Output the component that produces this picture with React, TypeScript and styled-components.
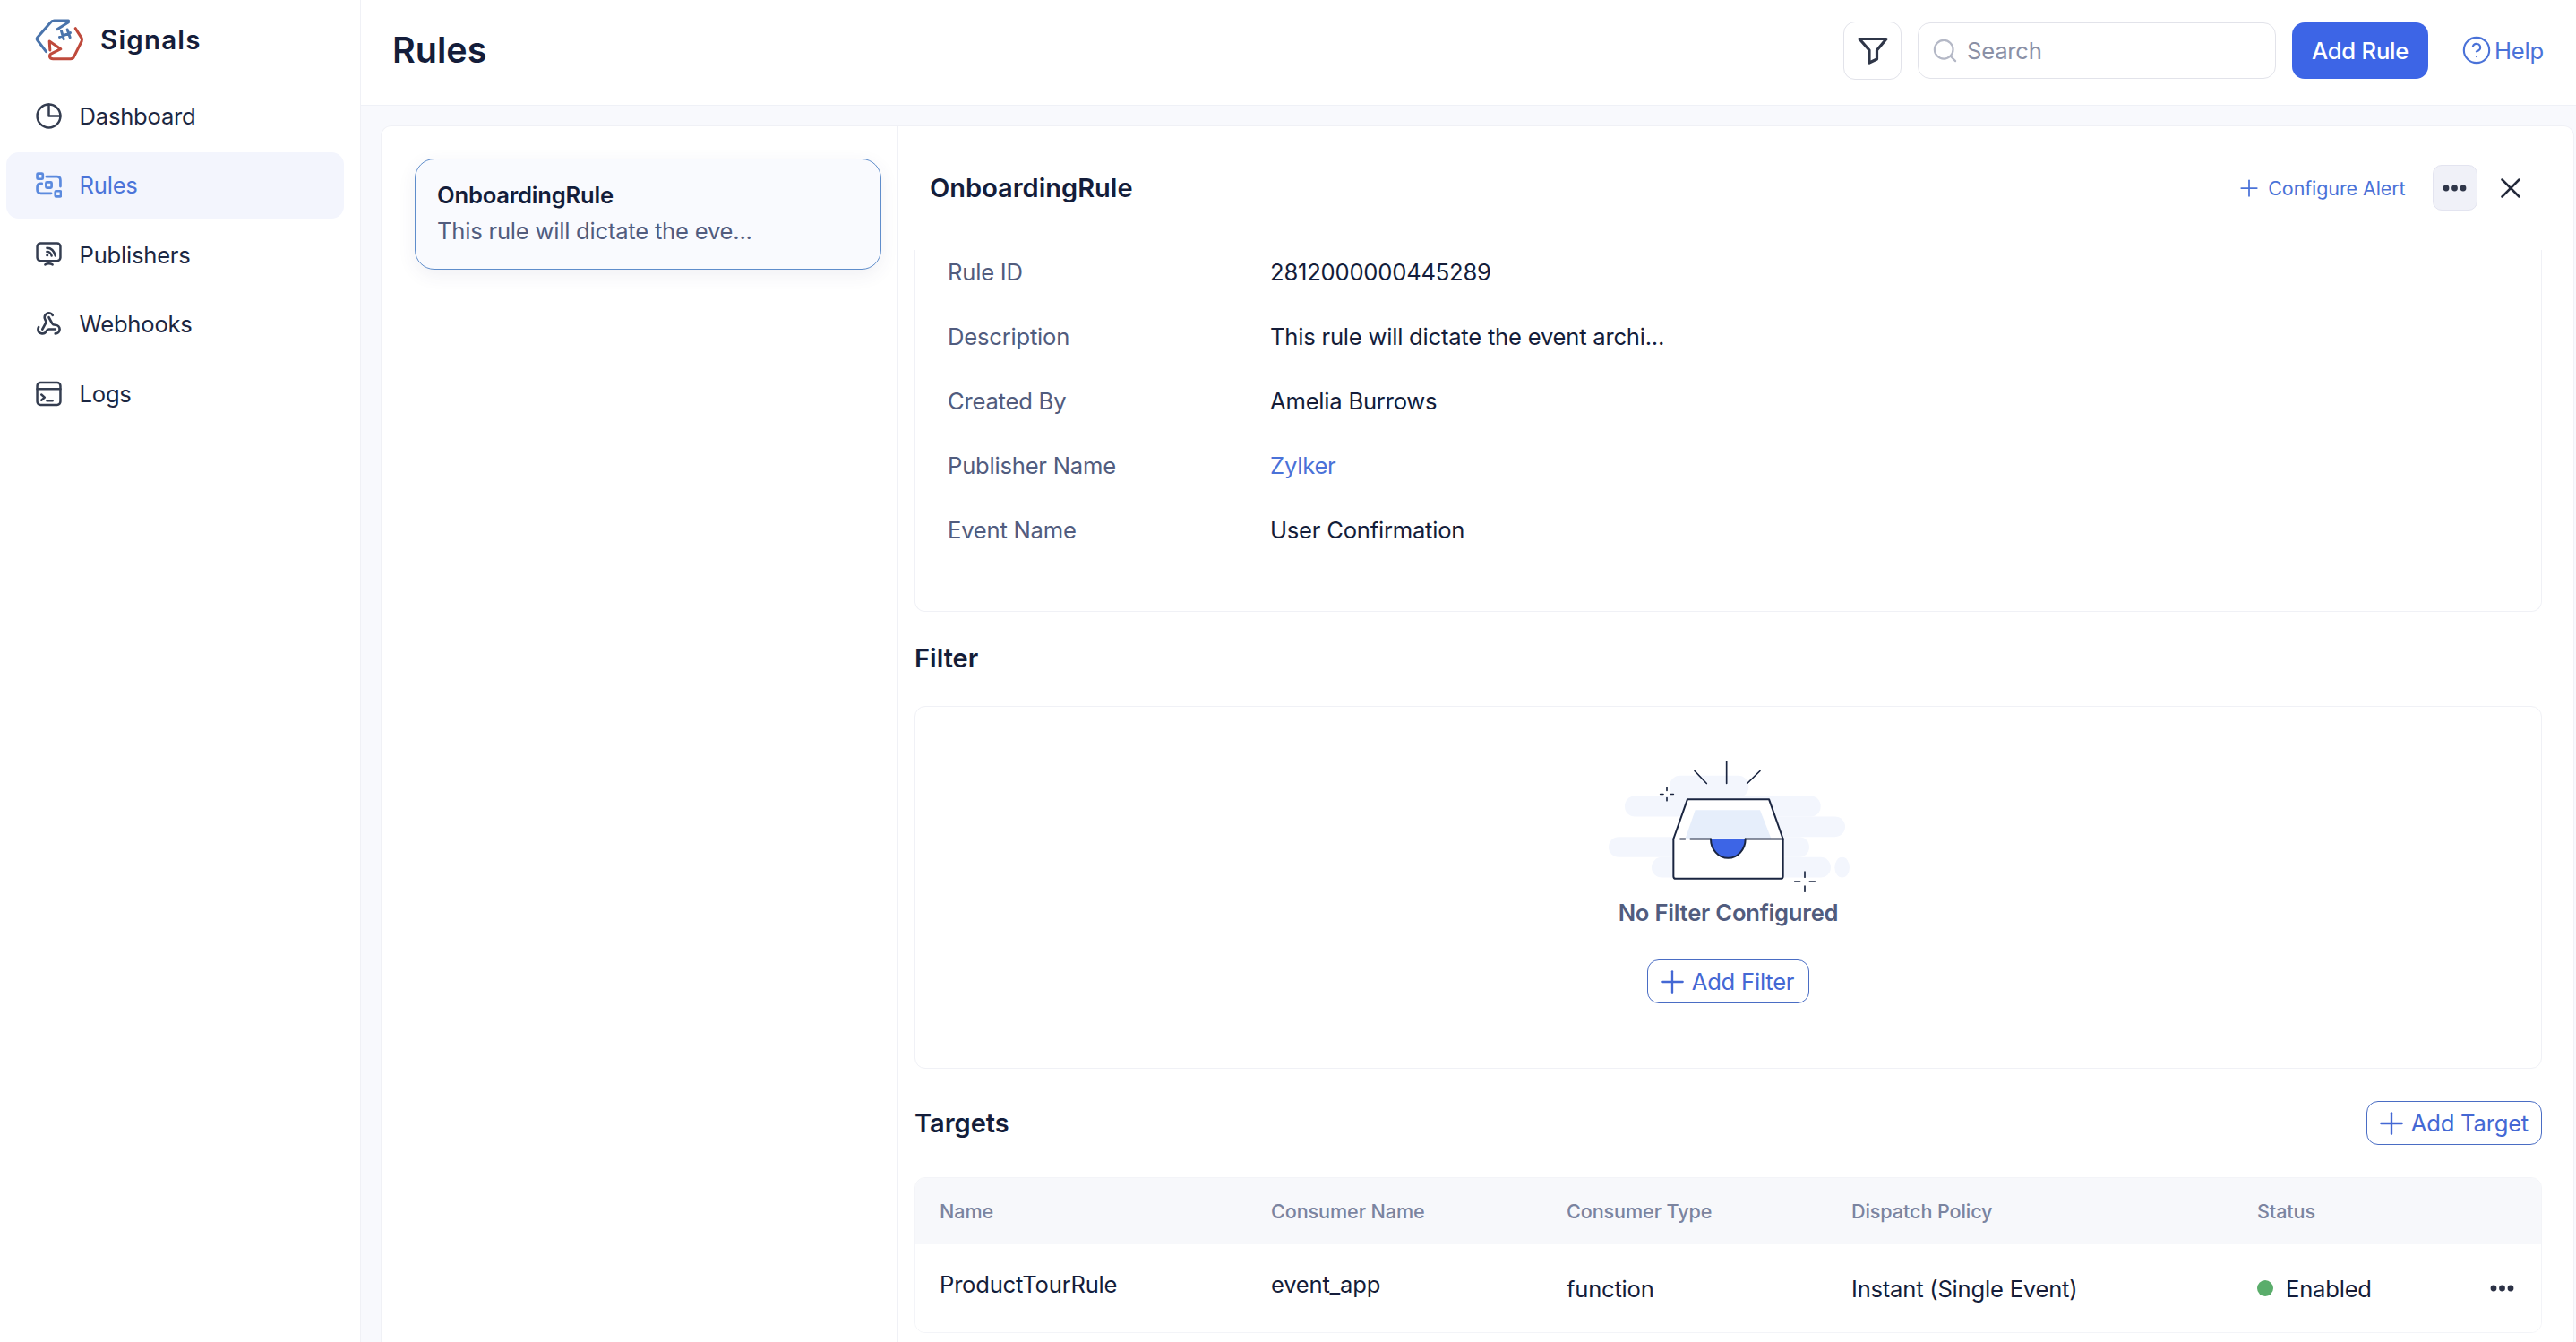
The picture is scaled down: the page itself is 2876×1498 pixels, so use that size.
import React from "react";
import styled, { createGlobalStyle } from "styled-components";
import { Search, CircleHelp, Plus, X, Webhook } from "lucide-react";

const Global = createGlobalStyle`
  html, body { margin: 0; padding: 0; background: #fff; }
  body { font-family: Inter, "Noto Sans", sans-serif; color: #141d3a; }
  * { box-sizing: border-box; }
`;

const Page = styled.div`
  width: 2876px; height: 1498px; overflow: hidden;
  display: grid; grid-template-columns: 403px 1fr; background: #fff;
`;
const Sidebar = styled.aside`
  border-right: 1px solid #f0f1f6;
  padding: 0 18px 0 7px;
  display: flex; flex-direction: column;
`;
const Brand = styled.div`
  height: 92px; display: flex; align-items: flex-start; gap: 17px;
  padding: 20px 0 0 31px;
`;
const BrandName = styled.span`
  font-size: 29.5px; font-weight: 600; letter-spacing: 1.2px; line-height: 48px; color: #141d3a;
`;
const Nav = styled.nav`display: flex; flex-direction: column; gap: 3.5px;`;
const NavItem = styled.div<{ $active?: boolean }>`
  height: 74px; border-radius: 14px; display: flex; align-items: center; gap: 19.5px;
  padding-left: 33px; font-size: 25.6px; letter-spacing: -0.22px;
  background: ${p => (p.$active ? "#f3f5fd" : "transparent")};
  color: ${p => (p.$active ? "#4b74d9" : "#1c2742")};
  svg { width: 29px; height: 29px; flex: none; color: ${p => (p.$active ? "#5b8ade" : "#343d50")}; }
`;
const Main = styled.main`display: flex; flex-direction: column; background: #f8f9fd; min-width: 0;`;
const Header = styled.header`
  height: 118px; flex: none; background: #fff; border-bottom: 1px solid #eff1f7;
  display: flex; align-items: center; padding: 0 36px 5px 35px;
`;
const Title = styled.h1`margin: 0 auto 0 0; font-size: 39.5px; font-weight: 600; color: #141d3a;`;
const IconButton = styled.button`
  width: 65px; height: 65px; border: 1px solid #e2e3ea; border-radius: 13px; background: #fff;
  display: flex; align-items: center; justify-content: center; padding: 0; color: #2f3648;
`;
const SearchBox = styled.div`
  width: 400px; height: 63px; margin-left: 18px; border: 1.5px solid #e2e3ea; border-radius: 14px;
  display: flex; align-items: center; gap: 9px; padding-left: 14px; font-size: 25.6px; letter-spacing: -0.22px; color: #8a90a6;
  svg { width: 31px; height: 31px; color: #b4b8c6; stroke-width: 1.7; }
`;
const PrimaryButton = styled.button`
  width: 152px; height: 63px; margin-left: 18px; border: 0; border-radius: 14px;
  background: #3d65e6; color: #fff; font: 500 25.6px Inter, sans-serif; letter-spacing: -0.22px;
`;
const HelpLink = styled.a`
  margin-left: 37px; display: flex; align-items: center; gap: 3px; font-size: 25.6px; letter-spacing: -0.22px; color: #4a72d8;
  svg { width: 34px; height: 34px; stroke-width: 1.5; }
`;
const Board = styled.div`
  flex: 1; min-height: 0; margin: 22px 2px 0 22px; background: #fff;
  border: 1px solid #f0f1f6; border-bottom: 0; border-radius: 12px 12px 0 0;
  display: grid; grid-template-columns: 577px 1fr;
`;
const ListPane = styled.section`border-right: 1px solid #f0f1f6; padding: 36px 18px 0 37px;`;
const RuleCard = styled.div`
  height: 124px; border: 1.5px solid #5f8dcb; border-radius: 22px; background: #f9fafe;
  box-shadow: 0 6px 20px rgba(60, 70, 110, 0.08);
  padding: 22px 24px; display: flex; flex-direction: column; gap: 4px;
`;
const RuleName = styled.div`font-size: 25.6px; letter-spacing: -0.22px; font-weight: 600; line-height: 36px; color: #141d3a;`;
const RuleDesc = styled.div`font-size: 25.6px; letter-spacing: -0.22px; line-height: 36px; color: #515c7e;`;
const DetailPane = styled.section`padding: 0 35px 0 18px; min-width: 0;`;
const DetailHead = styled.div`
  height: 138px; display: flex; align-items: center; padding: 0 16.500px 1px 0;
`;
const DetailTitle = styled.h2`margin: 0 auto 0 0; padding-left: 17px; font-size: 29px; font-weight: 600; color: #141d3a;`;
const TextAction = styled.a`
  display: flex; align-items: center; gap: 6px; font-size: 21.5px; letter-spacing: -0.1px; color: #4a72d8;
  svg { width: 30px; height: 30px; stroke-width: 1.4; }
`;
const MoreButton = styled.button`
  width: 50px; height: 51px; margin: 0 18px 0 30px; border: 1px solid #e3e4f0; border-radius: 10px;
  background: #f0f1f8; display: flex; align-items: center; justify-content: center; padding: 0; color: #30374a;
`;
const CloseIcon = styled(X)`width: 38px; height: 38px; color: #23293a; stroke-width: 1.6;`;
const InfoBox = styled.div`
  border: 1px solid #f0f1f6; border-top: 0; border-radius: 0 0 12px 12px;
  padding: 5px 36px 70px; display: flex; flex-direction: column; gap: 32px;
`;
const InfoRow = styled.div`
  display: grid; grid-template-columns: 360px 1fr; font-size: 25.6px; letter-spacing: -0.22px; line-height: 40px;
`;
const InfoLabel = styled.span`color: #515c7e;`;
const InfoValue = styled.span<{ $link?: boolean }>`color: ${p => (p.$link ? "#4a72d8" : "#141d3a")};`;
const SectionTitle = styled.h3`margin: 0; font-size: 29px; font-weight: 600; line-height: 40px; color: #141d3a;`;
const FilterTitle = styled(SectionTitle)`margin: 32px 0 33px;`;
const EmptyBox = styled.div`
  height: 405px; border: 1px solid #f0f1f6; border-radius: 12px;
  display: flex; flex-direction: column; align-items: center; padding-top: 60px;
`;
const ArtFrame = styled.div`display: flex; margin-left: 2px;`;
const EmptyTitle = styled.div`font-size: 25.6px; letter-spacing: -0.22px; font-weight: 600; line-height: 36px; color: #515c7e; margin-top: 5px;`;
const OutlineButton = styled.button`
  height: 49px; padding: 0 14px 0 7px; border: 1.5px solid #4a6dc4; border-radius: 13px; background: #fff;
  display: flex; align-items: center; gap: 2px; color: #4468d4; font: 400 25.6px Inter, sans-serif; letter-spacing: -0.22px;
  svg { width: 40px; height: 40px; stroke-width: 1.4; }
`;
const AddFilterButton = styled(OutlineButton)`margin-top: 34px; padding-right: 16px;`;
const TargetsHead = styled.div`
  margin: 36px 0; display: flex; align-items: center; justify-content: space-between;
`;
const Table = styled.div`
  border: 1px solid #f3f4f8; border-radius: 12px; overflow: hidden;
`;
const Row = styled.div<{ $head?: boolean }>`
  display: grid; grid-template-columns: 370px 330px 318px 453px 1fr; align-items: center;
  padding-left: 27px; height: ${p => (p.$head ? "74px" : "98px")};
  background: ${p => (p.$head ? "#f7f8fb" : "#fff")};
`;
const HeadCell = styled.span`font-size: 21.6px; letter-spacing: -0.1px; font-weight: 500; color: #7b84a0;`;
const Cell = styled.span<{ $raised?: boolean }>`
  font-size: 25.6px; letter-spacing: -0.22px; color: #141d3a; padding-bottom: ${p => (p.$raised ? "9px" : "0")};
`;
const StatusCell = styled(Cell)`
  display: flex; align-items: center; padding-right: 30px;
`;
const Dot = styled.i`flex: none; width: 18px; height: 18px; border-radius: 50%; background: #5aad6b; margin-right: 14px;`;
const RowMore = styled.span`margin-left: auto; display: flex; color: #2b3145;`;

const Dots = () => (
  <svg width="27" height="8" viewBox="0 0 27 8" fill="currentColor">
    <circle cx="4" cy="4" r="3.4" /><circle cx="13.5" cy="4" r="3.4" /><circle cx="23" cy="4" r="3.4" />
  </svg>
);

const Logo = () => (
  <svg width="57" height="50" viewBox="115 60 170 150" fill="none" strokeWidth="9" strokeLinecap="round" strokeLinejoin="round">
    <g stroke="#4a74ac">
      <path d="M230 69H182q-8 0-12 6l-44 50q-4 5 0 10l29 38" />
      <path d="M230 74l-38 24" />
      <path d="M206 104l8 27M226 99l9 26M200 124l36-14" />
    </g>
    <path stroke="#bf4a3c" d="M253 95l21 33q2 5 0 10l-26 52q-3 7-11 7H178q-10 0-11-7-1-8 7-11l30-15-38-26 2 30" />
  </svg>
);

const DashboardIcon = () => (
  <svg viewBox="0 0 28 28" fill="none" stroke="currentColor" strokeWidth="2.4" strokeLinecap="round" strokeLinejoin="round">
    <path d="M14 1.5a12.5 12.5 0 1 0 12.5 12.5H14z" /><path d="M14 1.5a12.5 12.5 0 0 1 12.5 12.5" />
  </svg>
);
const RulesIcon = () => (
  <svg viewBox="0 0 28 28" fill="none" stroke="currentColor" strokeWidth="2.6" strokeLinecap="round" strokeLinejoin="round">
    <rect x="1.5" y="1.5" width="6" height="6" rx="1" /><rect x="11" y="11" width="6" height="6" rx="1" /><rect x="21" y="20.5" width="6" height="6" rx="1" />
    <path d="M11.5 5h11q4 0 4 4v6.5M16.500 23H5.500q-4 0-4-4v-2.500q0-4 4-4h1" />
  </svg>
);
const PublishersIcon = () => (
  <svg viewBox="0 0 28 28" fill="none" stroke="currentColor" strokeWidth="2.4" strokeLinecap="round" strokeLinejoin="round">
    <rect x="1.500" y="1.500" width="25" height="19" rx="3.500" />
    <path d="M10 24.500q4-2 8 0" />
    <path d="M12 6.500q7 0 9 8.500M12 10.500q4 0 5 4.500M12 14.500h.6" />
  </svg>
);
const LogsIcon = () => (
  <svg viewBox="0 0 28 28" fill="none" stroke="currentColor" strokeWidth="2.4" strokeLinecap="round" strokeLinejoin="round">
    <rect x="1.500" y="2" width="25" height="24" rx="3.500" />
    <path d="M1.500 9h25M6 15l3.500 3L6 21M12 21.500h6" />
  </svg>
);
const FunnelIcon = () => (
  <svg width="34" height="31" viewBox="0 0 34 31" fill="none" stroke="currentColor" strokeWidth="3.200" strokeLinejoin="round">
    <path d="M2 2.500H32L21.500 15V25L13 29V15Z" />
  </svg>
);
const EmptyArt = () => (
  <svg width="269" height="147" viewBox="168 85 807 440" fill="none" strokeLinecap="round">
    <g fill="#f3f6fd">
      <rect x="372" y="135" width="265" height="72" rx="35" />
      <rect x="222" y="203" width="656" height="69" rx="34" />
      <rect x="480" y="272" width="480" height="68" rx="34" />
      <rect x="168" y="340" width="672" height="68" rx="34" />
      <rect x="312" y="408" width="600" height="68" rx="34" />
      <ellipse cx="950" cy="442" rx="25" ry="34" />
    </g>
    <path d="M385 347L432 214H705L752 347" fill="#fff" stroke="#1a2540" strokeWidth="6" strokeLinejoin="round" />
    <path d="M425 345L458 250H675L712 345Z" fill="#e6eefb" />
    <path d="M385 347H752V472q0 8-8 8H393q-8 0-8-8Z" fill="#fff" />
    <path d="M385 347V472q0 8 8 8H744q8 0 8-8V347" stroke="#1a2540" strokeWidth="6" />
    <path d="M510 347a58 64 0 0 0 116 0Z" fill="#3d65e6" />
    <path d="M510 347a58 64 0 0 0 116 0" stroke="#1a2540" strokeWidth="6" />
    <path d="M408 347h16M442 347h68M626 347h126" stroke="#1a2540" strokeWidth="6" />
    <path d="M563 87v74M456 119l40 42M675 119l-43 42" stroke="#1a2540" strokeWidth="5" />
    <path d="M363 175v10M363 209v10M341 197h10M375 197h10M825 457v18M825 505v18M791 490h18M841 490h18" stroke="#1a2540" strokeWidth="5" />
  </svg>
);

const navItems = [
  { label: "Dashboard", icon: <DashboardIcon /> },
  { label: "Rules", icon: <RulesIcon />, active: true },
  { label: "Publishers", icon: <PublishersIcon /> },
  { label: "Webhooks", icon: <Webhook strokeWidth={2.2} /> },
  { label: "Logs", icon: <LogsIcon /> },
];
const info: { label: string; value: string; link?: boolean }[] = [
  { label: "Rule ID", value: "2812000000445289" },
  { label: "Description", value: "This rule will dictate the event archi..." },
  { label: "Created By", value: "Amelia Burrows" },
  { label: "Publisher Name", value: "Zylker", link: true },
  { label: "Event Name", value: "User Confirmation" },
];

export default function App() {
  return (
    <Page>
      <Global />
      <Sidebar>
        <Brand><Logo /><BrandName>Signals</BrandName></Brand>
        <Nav>
          {navItems.map(n => (
            <NavItem key={n.label} $active={n.active}>{n.icon}{n.label}</NavItem>
          ))}
        </Nav>
      </Sidebar>
      <Main>
        <Header>
          <Title>Rules</Title>
          <IconButton><FunnelIcon /></IconButton>
          <SearchBox><Search />Search</SearchBox>
          <PrimaryButton>Add Rule</PrimaryButton>
          <HelpLink><CircleHelp />Help</HelpLink>
        </Header>
        <Board>
          <ListPane>
            <RuleCard>
              <RuleName>OnboardingRule</RuleName>
              <RuleDesc>This rule will dictate the eve...</RuleDesc>
            </RuleCard>
          </ListPane>
          <DetailPane>
            <DetailHead>
              <DetailTitle>OnboardingRule</DetailTitle>
              <TextAction><Plus />Configure Alert</TextAction>
              <MoreButton><Dots /></MoreButton>
              <CloseIcon />
            </DetailHead>
            <InfoBox>
              {info.map(r => (
                <InfoRow key={r.label}>
                  <InfoLabel>{r.label}</InfoLabel>
                  <InfoValue $link={r.link}>{r.value}</InfoValue>
                </InfoRow>
              ))}
            </InfoBox>
            <FilterTitle>Filter</FilterTitle>
            <EmptyBox>
              <ArtFrame><EmptyArt /></ArtFrame>
              <EmptyTitle>No Filter Configured</EmptyTitle>
              <AddFilterButton><Plus />Add Filter</AddFilterButton>
            </EmptyBox>
            <TargetsHead>
              <SectionTitle>Targets</SectionTitle>
              <OutlineButton><Plus />Add Target</OutlineButton>
            </TargetsHead>
            <Table>
              <Row $head>
                <HeadCell>Name</HeadCell>
                <HeadCell>Consumer Name</HeadCell>
                <HeadCell>Consumer Type</HeadCell>
                <HeadCell>Dispatch Policy</HeadCell>
                <HeadCell>Status</HeadCell>
              </Row>
              <Row>
                <Cell $raised>ProductTourRule</Cell>
                <Cell $raised>event_app</Cell>
                <Cell>function</Cell>
                <Cell>Instant (Single Event)</Cell>
                <StatusCell><Dot />Enabled<RowMore><Dots /></RowMore></StatusCell>
              </Row>
            </Table>
          </DetailPane>
        </Board>
      </Main>
    </Page>
  );
}
